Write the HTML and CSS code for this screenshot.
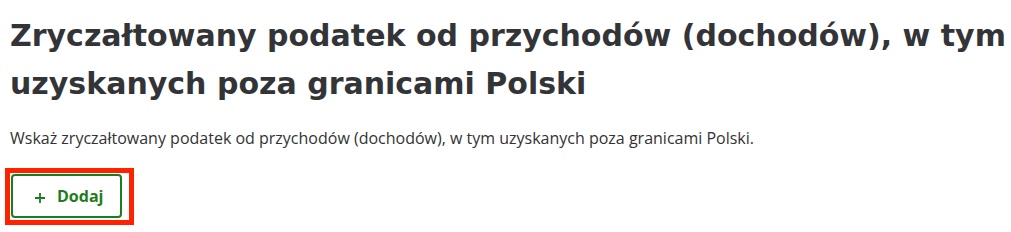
FILE: index.html
```html
<!DOCTYPE html>
<html lang="pl">
<head>
    <meta charset="UTF-8">
    <title>Zryczałtowany podatek</title>
    <link rel="stylesheet" href="styles.css">
</head>
<body>
    <div class="section">
        <h1 class="section-title">Zryczałtowany podatek od przychodów (dochodów), w tym uzyskanych poza granicami Polski</h1>
        <p class="section-hint">Wskaż zryczałtowany podatek od przychodów (dochodów), w tym uzyskanych poza granicami Polski.</p>
        <div class="highlight">
            <button class="btn-add" type="button">
                <svg class="btn-add-icon" width="10" height="10" viewBox="0 0 10 10">
                    <path d="M5 0 V10 M0 5 H10" stroke="currentColor" stroke-width="1.8" fill="none"/>
                </svg>
                <span>Dodaj</span>
            </button>
        </div>
    </div>
</body>
</html>
```

FILE: styles.css
```css
body {
    margin: 0;
    background-color: #fff;
    font-family: "Open Sans", "Noto Sans", sans-serif;
    color: #333;
}

.section {
    padding: 12px 10px 0 10px;
    width: 1000px;
}

.section-title {
    margin: 0;
    font-family: "DejaVu Sans", sans-serif;
    font-weight: bold;
    font-size: 30px;
    line-height: 48px;
    color: #333438;
}

.section-hint {
    margin: 18px 0 0 0;
    font-size: 16px;
    line-height: 24px;
    color: #333;
}

.highlight {
    display: inline-block;
    margin: 18px 0 0 -5px;
    border: 5px solid #ff2200;
    padding: 1px 7px 2px 1px;
}

.btn-add {
    display: flex;
    align-items: center;
    gap: 12px;
    width: 111px;
    height: 44px;
    padding: 0 0 0 22px;
    background-color: #fff;
    border: 2px solid #1d7d1d;
    border-radius: 4px;
    color: #1d7d1d;
    font-family: "Open Sans", "Noto Sans", sans-serif;
    font-weight: bold;
    font-size: 16px;
    cursor: pointer;
}

.btn-add-icon {
    margin-top: 3px;
}
```
